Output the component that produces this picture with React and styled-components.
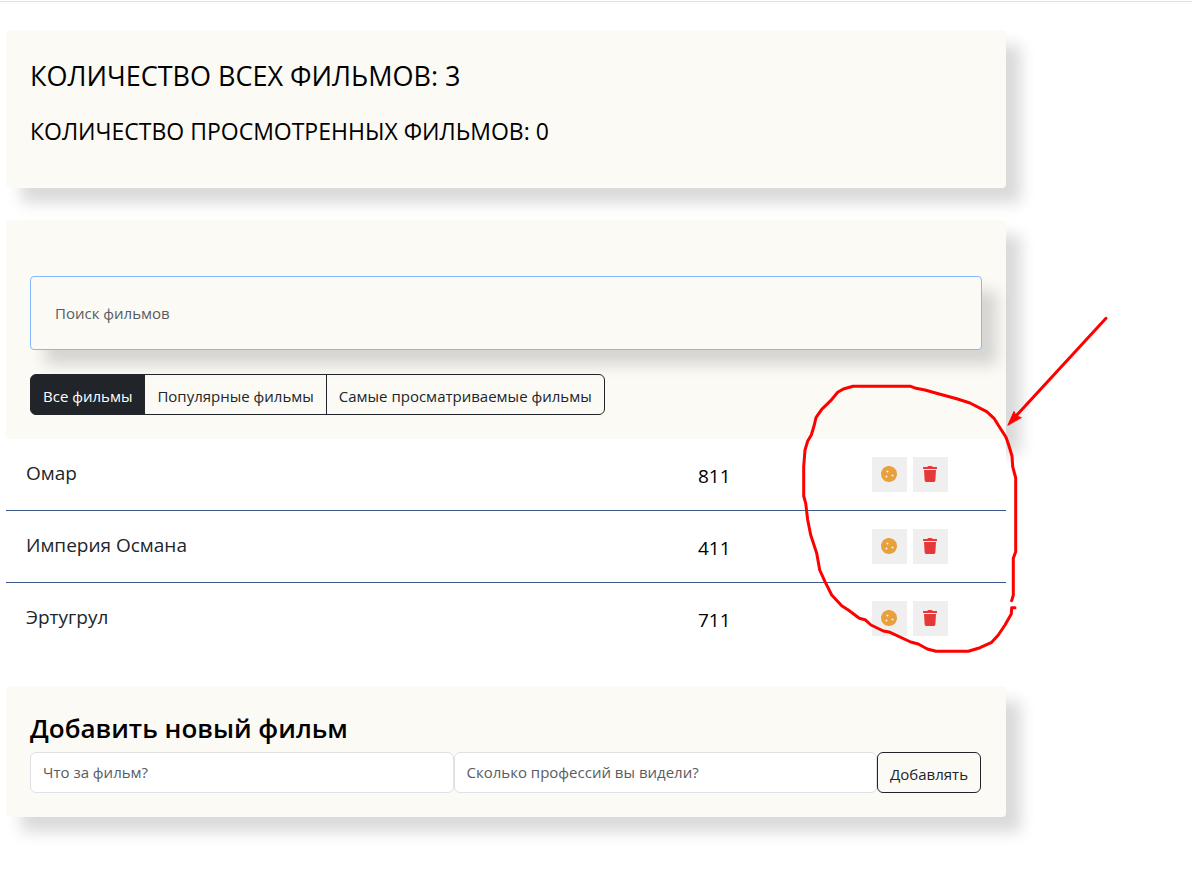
import React, { useState } from "react";
import styled, { createGlobalStyle } from "styled-components";
import { FaCookie, FaTrash } from "react-icons/fa";

const GlobalStyle = createGlobalStyle`
  *, *::before, *::after { box-sizing: border-box; }
  body {
    margin: 0;
    background: #fff;
    color: #212529;
    font-family: "Segoe UI", "Open Sans", "Noto Sans", sans-serif;
    font-size: 15px;
    line-height: 24px;
  }
  button, input { font: inherit; color: inherit; margin: 0; }
`;

const Page = styled.div`
  position: relative;
  padding: 1px 0 64px;
`;

const TopLine = styled.div`
  height: 1px;
  background: #f6d9d6;
`;

const Content = styled.main`
  display: flex;
  flex-direction: column;
  gap: 32px;
  max-width: 1000px;
  margin: 28px 6px 0;
`;

const Card = styled.section`
  padding: 24px;
  background: #fcfaf5;
  border-radius: 4px;
  box-shadow: 15px 15px 15px rgba(0, 0, 0, 0.15);
  color: #000;
`;

const Total = styled.p`
  margin: 0 0 16px;
  font-size: 27px;
  line-height: 44px;
  text-transform: uppercase;
`;

const Watched = styled.p`
  margin: 0 0 16px;
  font-size: 23px;
  line-height: 34px;
  text-transform: uppercase;
`;

const SearchInput = styled.input`
  display: block;
  width: 100%;
  height: 74px;
  margin: 32px 0 24px;
  padding: 24px;
  background: #fcfaf5;
  border: 1px solid #86b7fe;
  border-radius: 4px;
  box-shadow: 15px 15px 15px rgba(0, 0, 0, 0.15);
  outline: 0;
  &::placeholder { color: #595c5f; opacity: 1; }
`;

const Filters = styled.div`
  display: flex;
`;

const OutlineButton = styled.button`
  height: 41px;
  padding: 2px 12px 0;
  border: 1px solid #212529;
  border-radius: 6px;
  background: ${(p) => (p.$active ? "#212529" : "transparent")};
  color: ${(p) => (p.$active ? "#fff" : "#212529")};
  white-space: nowrap;
  cursor: pointer;
`;

const FilterButton = styled(OutlineButton)`
  border-radius: 0;
  &:first-child { border-radius: 6px 0 0 6px; }
  &:last-child { border-radius: 0 6px 6px 0; }
  & + & { margin-left: -1px; }
`;

const Library = styled.div``;

const List = styled.ul`
  margin: 0;
  padding: 0;
  list-style: none;
  background: #fff;
`;

const Row = styled.li`
  display: grid;
  grid-template-columns: 1fr 174px auto;
  padding: 18px 58px 18px 20px;
  border-bottom: 1px solid #3d5a8a;
  font-size: 19px;
  &:last-child { border-bottom: 0; }
`;

const Title = styled.span`
  line-height: 32px;
`;

const Count = styled.span`
  padding-top: 3px;
  line-height: 32px;
  color: #000;
`;

const Actions = styled.div`
  display: flex;
  gap: 6px;
`;

const IconButton = styled.button`
  display: flex;
  align-items: center;
  justify-content: center;
  width: 35px;
  height: 35px;
  padding: 0 1px 1px 0;
  border: 0;
  background: #efefef;
  color: ${(p) => p.$tone};
  font-size: 16px;
  cursor: pointer;
`;

const FormTitle = styled.h3`
  margin: 0 0 6px;
  font-size: 26px;
  line-height: 36px;
  font-weight: 600;
`;

const AddForm = styled.form`
  display: flex;
  padding-right: 1px;
`;

const TextInput = styled.input`
  flex: 1 1 0;
  min-width: 0;
  height: 41px;
  padding: 6px 12px 8px;
  background: #fff;
  border: 1px solid #dee2e6;
  border-radius: 6px;
  &::placeholder { color: #595c5f; opacity: 1; }
`;

const Markup = styled.svg`
  position: absolute;
  left: 800px;
  top: 316px;
  pointer-events: none;
`;

const films = [
  { title: "Омар", views: 811 },
  { title: "Империя Османа", views: 411 },
  { title: "Эртугрул", views: 711 },
];

const filters = ["Все фильмы", "Популярные фильмы", "Самые просматриваемые фильмы"];

export default function App() {
  const [active, setActive] = useState(0);
  return (
    <Page>
      <GlobalStyle />
      <TopLine />
      <Content>
        <Card>
          <Total>Количество всех фильмов: 3</Total>
          <Watched>Количество просмотренных фильмов: 0</Watched>
        </Card>
        <Library>
          <Card>
            <SearchInput type="text" aria-label="Поиск фильмов" placeholder="Поиск фильмов" />
            <Filters>
              {filters.map((name, i) => (
                <FilterButton key={name} type="button" $active={i === active} onClick={() => setActive(i)}>
                  {name}
                </FilterButton>
              ))}
            </Filters>
          </Card>
          <List>
            {films.map((film) => (
              <Row key={film.title}>
                <Title>{film.title}</Title>
                <Count>{film.views}</Count>
                <Actions>
                  <IconButton type="button" aria-label="Избранное" $tone="#e8a03c">
                    <FaCookie />
                  </IconButton>
                  <IconButton type="button" aria-label="Удалить" $tone="#e63838">
                    <FaTrash />
                  </IconButton>
                </Actions>
              </Row>
            ))}
          </List>
        </Library>
        <Card>
          <FormTitle>Добавить новый фильм</FormTitle>
          <AddForm onSubmit={(e) => e.preventDefault()}>
            <TextInput type="text" aria-label="Что за фильм?" placeholder="Что за фильм?" />
            <TextInput
              type="text"
              aria-label="Сколько профессий вы видели?"
              placeholder="Сколько профессий вы видели?"
            />
            <OutlineButton type="submit">Добавлять</OutlineButton>
          </AddForm>
        </Card>
      </Content>
      <Markup
        width="308"
        height="340"
        viewBox="800 316 308 340"
        fill="none"
        stroke="#fe0000"
        strokeWidth="3"
        strokeLinecap="round"
        strokeLinejoin="round"
        aria-hidden="true"
      >
        <path d="M1011.7 600.7L1013.3 595V558.3L1015.7 551.7V478L1012.7 466.7L1012 456L1008.7 445L1006 437.3L999.3 426.7L994.3 418.7L986.7 411.7L970 403L956.7 398.7L938.3 393.7L925 390L916 388.3L910.7 386.3H853L843.3 389L837.7 392.3L830.7 400.7L821.7 409.3L816 417.7L814.3 425L811.3 435L807.7 441L805 450L803.7 466.7V496L805.7 503.3L807.7 520L810.7 535L816.7 553.3L819.7 570L825 581.7L831.7 595L841.7 605.7L848.3 610L859.3 618.3L865 619.7L871 625L883.3 631L890 632.3L910.7 642L918.3 644L927.3 649L936 651.3H968.3L980 647.7L991.7 642.3L998.3 635L1005 625L1011.3 614L1011.7 607.7H1015" />
        <path d="M1106 318.3L1016 416" />
        <path d="M1008 425L1014 411.5L1016 416L1021 417.5Z" fill="#fe0000" strokeWidth="1" />
      </Markup>
    </Page>
  );
}
